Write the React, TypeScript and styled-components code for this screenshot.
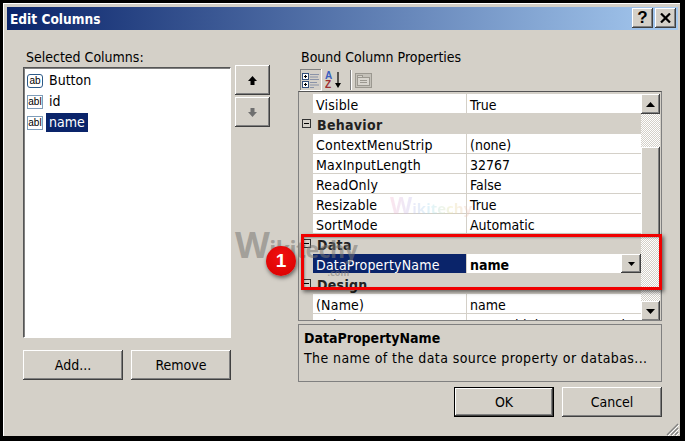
import styled, { createGlobalStyle, css } from 'styled-components';

const GlobalStyle = createGlobalStyle`
  html, body {
    margin: 0;
    padding: 0;
    background: #000;
  }
`;

const bevel = css`
  background: #d4d0c8;
  box-shadow:
    inset -1px -1px #404040,
    inset 1px 1px #fff,
    inset -2px -2px #808080,
    inset 2px 2px #d4d0c8;
`;

const fontStack = `"DejaVu Sans Condensed", "DejaVu Sans", sans-serif`;

const rows: { name: string; value?: string; category?: boolean; selected?: boolean }[] = [
  { name: 'Visible', value: 'True' },
  { name: 'Behavior', category: true },
  { name: 'ContextMenuStrip', value: '(none)' },
  { name: 'MaxInputLength', value: '32767' },
  { name: 'ReadOnly', value: 'False' },
  { name: 'Resizable', value: 'True' },
  { name: 'SortMode', value: 'Automatic' },
  { name: 'Data', category: true },
  { name: 'DataPropertyName', value: 'name', selected: true },
  { name: 'Design', category: true },
  { name: '(Name)', value: 'name' },
  { name: 'ColumnType', value: 'DataGridViewTextBoxColumn' },
];

export default function App() {
  return (
    <>
      <GlobalStyle />
      <Window>
        <TitleBar>
          <Title>Edit Columns</Title>
          <CaptionButton>?</CaptionButton>
          <CaptionButton>
            <svg width="11" height="10" viewBox="0 0 11 10">
              <path d="M1 0.5 L10 9.5 M10 0.5 L1 9.5" stroke="#000" strokeWidth="2.2" />
            </svg>
          </CaptionButton>
        </TitleBar>
        <Body>
          <LeftColumn>
            <Label>Selected Columns:</Label>
            <ColumnList>
              <ColumnItem>
                <ButtonIcon>ab</ButtonIcon>
                <ItemText>Button</ItemText>
              </ColumnItem>
              <ColumnItem>
                <TextIcon>abl</TextIcon>
                <ItemText>id</ItemText>
              </ColumnItem>
              <ColumnItem>
                <TextIcon>abl</TextIcon>
                <ItemText $selected>name</ItemText>
              </ColumnItem>
            </ColumnList>
            <ButtonRow>
              <DialogButton>Add...</DialogButton>
              <DialogButton>Remove</DialogButton>
            </ButtonRow>
          </LeftColumn>

          <MoverColumn>
            <MoverButton>
              <svg width="11" height="11" viewBox="0 0 11 11">
                <path d="M5.5 1 L10 6 H7.5 V10 H3.5 V6 H1 Z" fill="#000" />
              </svg>
            </MoverButton>
            <MoverButton>
              <svg width="11" height="11" viewBox="0 0 11 11">
                <path d="M3.5 1 H7.5 V5 H10 L5.5 10 L1 5 H3.5 Z" fill="#6f6f6f" />
              </svg>
            </MoverButton>
          </MoverColumn>

          <RightColumn>
            <Label>Bound Column Properties</Label>
            <Toolbar>
              <ToolButton $active>
                <svg width="18" height="17" viewBox="0 0 18 17">
                  <rect x="0.5" y="1.5" width="6" height="6" fill="#fff" stroke="#35507a" />
                  <path d="M2 4.5 H5 M3.5 3 V6" stroke="#000" />
                  <rect x="0.5" y="9.5" width="6" height="6" fill="#fff" stroke="#35507a" />
                  <path d="M2 12.5 H5 M3.5 11 V14" stroke="#000" />
                  <path
                    d="M8 2.5 H17 M8 5 H16 M8 7.5 H17 M8 10.5 H15 M8 13 H17 M8 15.5 H12"
                    stroke="#8a93a8"
                  />
                </svg>
              </ToolButton>
              <SortIcon>
                <svg width="18" height="20" viewBox="0 0 18 20">
                  <text x="0" y="9" fontFamily="Liberation Sans" fontSize="10" fontWeight="bold" fill="#3a5fc0">A</text>
                  <text x="0" y="18" fontFamily="Liberation Sans" fontSize="10" fontWeight="bold" fill="#a03030">Z</text>
                  <path d="M13 2 V15" stroke="#000" strokeWidth="1.2" />
                  <path d="M10 13 H16 L13 18 Z" fill="#000" />
                </svg>
              </SortIcon>
              <ToolSeparator />
              <PagesIcon>
                <svg width="18" height="17" viewBox="0 0 18 17">
                  <rect x="0.5" y="1.5" width="16" height="14" fill="#c4c1b9" stroke="#9b9890" />
                  <rect x="2.5" y="3.5" width="5" height="2" fill="#d8d5ce" stroke="#9b9890" />
                  <rect x="2.5" y="5.5" width="12" height="8" fill="#d8d5ce" stroke="#9b9890" />
                  <path d="M5 8.5 H12 M5 10.5 H12" stroke="#9b9890" />
                </svg>
              </PagesIcon>
            </Toolbar>

            <PropertyGrid>
              <GridRows>
                {rows.map(row =>
                  row.category ? (
                    <CategoryRow key={row.name}>
                      <Expander>
                        <svg width="9" height="9" viewBox="0 0 9 9">
                          <rect x="0.5" y="0.5" width="8" height="8" fill="none" stroke="#333" />
                          <path d="M2 4.5 H7" stroke="#000" />
                        </svg>
                      </Expander>
                      {row.name}
                    </CategoryRow>
                  ) : (
                    <PropertyRow key={row.name}>
                      <PropertyName $selected={row.selected}>{row.name}</PropertyName>
                      <PropertyValue $bold={row.selected}>
                        {row.value}
                        {row.selected && (
                          <DropButton>
                            <svg width="7" height="4" viewBox="0 0 7 4">
                              <path d="M0 0 H7 L3.5 4 Z" fill="#000" />
                            </svg>
                          </DropButton>
                        )}
                      </PropertyValue>
                    </PropertyRow>
                  ),
                )}
              </GridRows>
              <ScrollBar>
                <ScrollArrow>
                  <svg width="9" height="5" viewBox="0 0 9 5">
                    <path d="M4.5 0 L9 5 H0 Z" fill="#000" />
                  </svg>
                </ScrollArrow>
                <ScrollTrack $height={33} />
                <ScrollThumb />
                <ScrollTrack $height={65} />
                <ScrollArrow>
                  <svg width="9" height="5" viewBox="0 0 9 5">
                    <path d="M0 0 H9 L4.5 5 Z" fill="#000" />
                  </svg>
                </ScrollArrow>
              </ScrollBar>
            </PropertyGrid>

            <Description>
              <DescriptionTitle>DataPropertyName</DescriptionTitle>
              <DescriptionText>The name of the data source property or databas...</DescriptionText>
            </Description>

            <FooterRow>
              <DialogButton $default>OK</DialogButton>
              <DialogButton>Cancel</DialogButton>
            </FooterRow>
          </RightColumn>
        </Body>

        <ResizeGrip>
          <svg width="13" height="13" viewBox="0 0 13 13">
            <path d="M12 1 L1 12 M12 5 L5 12 M12 9 L9 12" stroke="#808080" strokeWidth="1.3" />
            <path d="M13 2 L2 13 M13 6 L6 13 M13 10 L10 13" stroke="#fff" />
          </svg>
        </ResizeGrip>

        <Watermark>
          <WatermarkInitial>W</WatermarkInitial>ikitechy
          <WatermarkDomain>.com</WatermarkDomain>
        </Watermark>
        <WatermarkLight>
          <WatermarkLightInitial>W</WatermarkLightInitial>ikitechy
        </WatermarkLight>

        <Callout />
        <CalloutBadge>1</CalloutBadge>
      </Window>
    </>
  );
}

// Styled Components
const Window = styled.div`
  position: relative;
  box-sizing: border-box;
  width: 681px;
  height: 437px;
  border: 3px solid #000;
  border-right: 1px solid #000;
  border-bottom: 1px solid #000;
  background: #d4d0c8;
  box-shadow: inset 1px 1px #fff;
  padding: 4px 2px 0 4px;
  overflow: hidden;
  font-family: ${fontStack};
  font-size: 14px;
  color: #000;
`;

const TitleBar = styled.div`
  display: flex;
  align-items: center;
  gap: 2px;
  height: 23px;
  padding: 0 2px 2px 3px;
  box-sizing: border-box;
  background: linear-gradient(90deg, #0a246a, #a6caf0);
`;

const Title = styled.div`
  flex: 1;
  padding-top: 2px;
  color: #fff;
  font-weight: bold;
  font-size: 13.6px;
`;

const CaptionButton = styled.div`
  ${bevel}
  width: 21px;
  height: 20px;
  display: flex;
  align-items: center;
  justify-content: center;
  font-family: "Liberation Sans", sans-serif;
  font-weight: bold;
  font-size: 17px;
`;

const Body = styled.div`
  display: flex;
  padding: 18px 0 0 16px;
`;

const LeftColumn = styled.div`
  display: flex;
  flex-direction: column;
  width: 208px;
`;

const Label = styled.div`
  height: 19px;
  line-height: 19px;
  padding-left: 3px;
  white-space: nowrap;
`;

const ColumnList = styled.div`
  box-sizing: border-box;
  height: 271px;
  padding: 2px 0 0 3px;
  background: #fff;
  border: 1px solid #fff;
  border-top-color: #555;
  border-left-color: #555;
  box-shadow: inset 1px 1px #808080, 0 1px #d4d0c8;
`;

const ColumnItem = styled.div`
  display: flex;
  align-items: center;
  height: 21px;
  gap: 3px;
`;

const ButtonIcon = styled.span`
  box-sizing: border-box;
  width: 16px;
  height: 14px;
  border: 1px solid #2d5a88;
  border-radius: 3px;
  font-family: "Liberation Sans", sans-serif;
  font-size: 10px;
  line-height: 11px;
  text-align: center;
  color: #000;
`;

const TextIcon = styled.span`
  box-sizing: border-box;
  width: 16px;
  height: 14px;
  border: 1px solid #7f9db9;
  font-family: "Liberation Sans", sans-serif;
  font-size: 10px;
  line-height: 12px;
  text-align: center;
  color: #000;
`;

const ItemText = styled.span<{ $selected?: boolean }>`
  padding: 0 3px;
  height: 19px;
  line-height: 19px;
  color: ${props => (props.$selected ? '#fff' : '#000')};
  background: ${props => (props.$selected ? '#0a246a' : 'transparent')};
`;

const ButtonRow = styled.div`
  display: flex;
  justify-content: space-between;
  margin-top: 12px;
`;

const DialogButton = styled.div<{ $default?: boolean }>`
  ${bevel}
  box-sizing: border-box;
  width: 100px;
  height: 30px;
  display: flex;
  align-items: center;
  justify-content: center;
  ${props =>
    props.$default &&
    css`
      border: 1px solid #000;
    `}
`;

const MoverColumn = styled.div`
  display: flex;
  flex-direction: column;
  gap: 2px;
  width: 35px;
  margin: 17px 28px 0 4px;
`;

const MoverButton = styled.div`
  ${bevel}
  height: 30px;
  display: flex;
  align-items: center;
  justify-content: center;
`;

const RightColumn = styled.div`
  display: flex;
  flex-direction: column;
  width: 364px;
`;

const Toolbar = styled.div`
  display: flex;
  align-items: center;
  height: 22px;
  margin-top: 2px;
  padding-left: 2px;
`;

const ToolButton = styled.div<{ $active?: boolean }>`
  box-sizing: border-box;
  width: 22px;
  height: 22px;
  display: flex;
  align-items: center;
  justify-content: center;
  box-shadow: ${props => (props.$active ? 'inset -1px -1px #fff, inset 1px 1px #808080' : 'none')};
`;

const SortIcon = styled.div`
  display: flex;
  margin-left: 3px;
`;

const ToolSeparator = styled.div`
  width: 1px;
  height: 20px;
  margin: 0 4px 0 7px;
  background: #808080;
  box-shadow: 1px 0 #fff;
`;

const PagesIcon = styled.div`
  display: flex;
`;

const PropertyGrid = styled.div`
  display: flex;
  box-sizing: border-box;
  height: 230px;
  padding-top: 2px;
  border: 1px solid #808080;
  border-top: 1px solid #555;
  overflow: hidden;
`;

const GridRows = styled.div`
  width: 342px;
  flex: none;
  overflow: hidden;
`;

const CategoryRow = styled.div`
  position: relative;
  height: 20px;
  line-height: 23px;
  padding-left: 18px;
  font-weight: bold;
  letter-spacing: 0.3px;
  color: #222;
`;

const Expander = styled.span`
  position: absolute;
  left: 3px;
  top: 5px;
  display: flex;
`;

const PropertyRow = styled.div`
  display: flex;
  height: 20px;
  margin-left: 14px;
  box-sizing: border-box;
  border-bottom: 1px solid #d4d0c8;
  background: #fff;
`;

const PropertyName = styled.div<{ $selected?: boolean }>`
  box-sizing: border-box;
  width: 154px;
  padding-left: 3px;
  line-height: 23px;
  height: 19px;
  overflow: hidden;
  border-right: 1px solid #d4d0c8;
  white-space: nowrap;
  letter-spacing: 0.2px;
  color: ${props => (props.$selected ? '#fff' : '#000')};
  background: ${props => (props.$selected ? '#0a246a' : 'transparent')};
`;

const PropertyValue = styled.div<{ $bold?: boolean }>`
  flex: 1;
  display: flex;
  justify-content: space-between;
  height: 19px;
  overflow: hidden;
  padding-left: 3px;
  line-height: 23px;
  white-space: nowrap;
  font-weight: ${props => (props.$bold ? 'bold' : 'normal')};
`;

const DropButton = styled.div`
  ${bevel}
  width: 20px;
  height: 19px;
  display: flex;
  align-items: center;
  justify-content: center;
`;

const ScrollBar = styled.div`
  display: flex;
  flex-direction: column;
  width: 19px;
  flex: none;
`;

const ScrollArrow = styled.div`
  ${bevel}
  flex: none;
  height: 20px;
  display: flex;
  align-items: center;
  justify-content: center;
`;

const ScrollTrack = styled.div<{ $height: number }>`
  flex: none;
  height: ${props => props.$height}px;
  background: repeating-conic-gradient(#fff 0 25%, #d4d0c8 0 50%) 0 0 / 2px 2px;
`;

const ScrollThumb = styled.div`
  ${bevel}
  flex: none;
  height: 89px;
`;

const Description = styled.div`
  box-sizing: border-box;
  height: 58px;
  margin-top: 3px;
  padding: 3px 5px;
  border: 1px solid #808080;
`;

const DescriptionTitle = styled.div`
  font-weight: bold;
  height: 20px;
  line-height: 20px;
`;

const DescriptionText = styled.div`
  line-height: 20px;
  white-space: nowrap;
  letter-spacing: 0.4px;
`;

const FooterRow = styled.div`
  display: flex;
  justify-content: flex-end;
  gap: 8px;
  margin-top: 5px;
`;

const ResizeGrip = styled.div`
  position: absolute;
  right: 1px;
  bottom: 0;
  display: flex;
`;

const Watermark = styled.div`
  position: absolute;
  left: 232px;
  top: 224px;
  font-family: "Open Sans", sans-serif;
  font-weight: bold;
  font-size: 23px;
  line-height: 36px;
  letter-spacing: -0.5px;
  color: rgba(120, 118, 114, 0.55);
  pointer-events: none;
`;

const WatermarkInitial = styled.span`
  font-size: 36px;
`;

const WatermarkDomain = styled.span`
  position: absolute;
  right: 8px;
  top: 28px;
  font-size: 9px;
  letter-spacing: 0;
`;

const WatermarkLight = styled.div`
  position: absolute;
  left: 387px;
  top: 190px;
  font-family: "Open Sans", sans-serif;
  font-weight: bold;
  font-size: 15px;
  line-height: 24px;
  background: linear-gradient(90deg, #f4b8d0, #c8c0ec, #a8e0f0, #e8e0a0, #f0c0c0);
  -webkit-background-clip: text;
  background-clip: text;
  color: transparent;
  opacity: 0.35;
`;

const WatermarkLightInitial = styled.span`
  font-size: 23px;
`;

const Callout = styled.div`
  position: absolute;
  left: 298px;
  top: 231px;
  width: 361px;
  height: 56px;
  box-sizing: border-box;
  border: 3px solid #f00000;
  box-shadow: 2px 2px 4px rgba(0, 0, 0, 0.55), inset 1px 1px 2px rgba(0, 0, 0, 0.3);
`;

const CalloutBadge = styled.div`
  position: absolute;
  left: 263px;
  top: 243px;
  width: 30px;
  height: 30px;
  border-radius: 50%;
  display: flex;
  align-items: center;
  justify-content: center;
  background: radial-gradient(circle at 50% 35%, #f01010, #d80000);
  box-shadow: 1px 2px 4px rgba(0, 0, 0, 0.55);
  color: #fff;
  font-family: "Liberation Sans", sans-serif;
  font-weight: bold;
  font-size: 19px;
`;
